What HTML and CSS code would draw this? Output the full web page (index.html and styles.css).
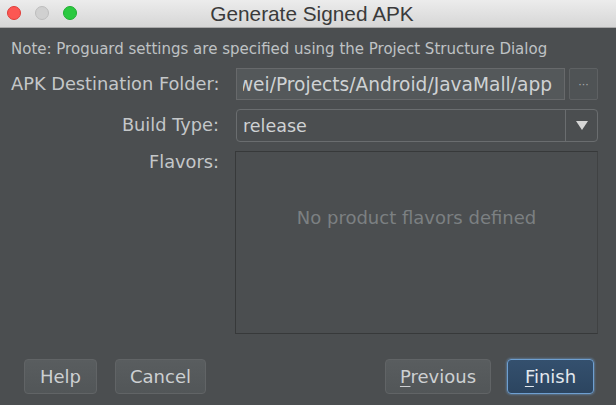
FILE: index.html
```html
<!DOCTYPE html>
<html>
<head>
<meta charset="utf-8">
<link rel="stylesheet" href="styles.css">
</head>
<body>
<div class="window">
  <div class="titlebar">
    <div class="lights">
      <span class="light red"></span>
      <span class="light gray"></span>
      <span class="light green"></span>
    </div>
    <div class="title">Generate Signed APK</div>
  </div>
  <div class="content">
    <div class="note">Note: Proguard settings are specified using the Project Structure Dialog</div>
    <div class="form">
      <label class="label">APK Destination Folder:</label>
      <div class="row">
        <div class="textfield"><div class="tf-clip"><span class="tf-text">wei/Projects/Android/JavaMall/app</span></div></div>
        <div class="browse">···</div>
      </div>
      <label class="label">Build Type:</label>
      <div class="combo">
        <span class="combo-text">release</span>
        <span class="combo-arrow"><svg width="12" height="9" viewBox="0 0 12 9"><polygon points="0,0 12,0 6,9" fill="#d6d6d6"/></svg></span>
      </div>
      <label class="label label-top">Flavors:</label>
      <div class="flavors"><span class="empty">No product flavors defined</span></div>
    </div>
    <div class="buttons">
      <div class="group">
        <button class="btn help">Help</button>
        <button class="btn cancel">Cancel</button>
      </div>
      <div class="group group-right">
        <button class="btn prev"><u>P</u>revious</button>
        <button class="btn primary finish"><u>F</u>inish</button>
      </div>
    </div>
  </div>
</div>
</body>
</html>
```
FILE: styles.css
```css
* { box-sizing: border-box; }
html, body { margin: 0; padding: 0; }
body {
  width: 616px;
  height: 405px;
  overflow: hidden;
  background: #4b4e50;
  font-family: "DejaVu Sans", "Liberation Sans", sans-serif;
}
.window {
  display: flex;
  flex-direction: column;
  height: 405px;
}
.titlebar {
  position: relative;
  height: 28px;
  flex: none;
  background: linear-gradient(#ececec, #d6d6d6);
  border-bottom: 1px solid #a9a9a9;
  display: flex;
  align-items: center;
  justify-content: center;
  padding-left: 8px;
}
.lights {
  position: absolute;
  left: 7px;
  top: 6px;
  display: flex;
  gap: 14px;
}
.light {
  width: 14px;
  height: 14px;
  border-radius: 50%;
  display: block;
}
.red { background: #fc5753; border: 1px solid #df3d39; }
.gray { background: #d0d0d0; border: 1px solid #bdbdbd; }
.green { background: #2bc940; border: 1px solid #1fae31; }
.title {
  font-family: "Liberation Sans", Arial, sans-serif;
  font-size: 20.8px;
  color: #3a3a3a;
  padding-top: 1px;
}
.content {
  flex: 1;
  padding: 11px 18px 0 11px;
  display: flex;
  flex-direction: column;
  background: #4b4e50;
}
.note {
  font-size: 15px;
  color: #bfc2c4;
  height: 21px;
  line-height: 21px;
  white-space: nowrap;
}
.form {
  margin-top: 8px;
  display: grid;
  grid-template-columns: 208px minmax(0, 1fr);
  column-gap: 17px;
  row-gap: 9px;
  grid-template-rows: 32px 33px 183px;
}
.label {
  font-size: 17.8px;
  color: #c4c7c9;
  text-align: right;
  line-height: 32px;
  white-space: nowrap;
}
.label-top { line-height: 22px; }
.row {
  display: flex;
  gap: 4px;
  min-width: 0;
}
.textfield {
  flex: 1;
  min-width: 0;
  background: #54585a;
  border: 1px solid #67696b;
  display: flex;
  align-items: center;
  padding: 0 12px 0 6px;
}
.tf-clip {
  flex: 1;
  min-width: 0;
  overflow: hidden;
  display: flex;
  justify-content: flex-end;
}
.tf-text {
  font-size: 18.6px;
  color: #cfd2d4;
  white-space: nowrap;
  flex: none;
}
.browse {
  width: 29px;
  flex: none;
  border: 1px solid #5e6163;
  background: #4f5355;
  color: #a9acae;
  font-size: 11px;
  display: flex;
  align-items: center;
  justify-content: center;
  border-radius: 2px;
}
.combo {
  border: 1px solid #6a6d6f;
  border-radius: 4px;
  display: flex;
  align-items: center;
  background: #4b4e50;
  min-width: 0;
}
.combo-text {
  flex: 1;
  padding-left: 6px;
  font-size: 17.5px;
  color: #cfd2d4;
}
.combo-arrow {
  width: 32px;
  align-self: stretch;
  border-left: 1px solid #6a6d6f;
  display: flex;
  align-items: center;
  justify-content: center;
}
.flavors {
  margin-left: -1px;
  border: 1px solid #37393a;
  border-right-color: #404243;
  background: #4b4e50;
  display: flex;
  align-items: center;
  justify-content: center;
  padding-bottom: 50px;
  min-width: 0;
}
.empty {
  font-size: 18px;
  color: #7c8082;
}
.buttons {
  margin-top: 25px;
  display: flex;
  justify-content: space-between;
  padding-left: 13px;
  padding-right: 4px;
}
.group {
  display: flex;
  gap: 18px;
}
.group-right { gap: 16px; }
.btn {
  font-family: "DejaVu Sans", "Liberation Sans", sans-serif;
  font-size: 18px;
  color: #cdd0d2;
  height: 35px;
  border-radius: 4px;
  border: 1px solid #616466;
  background: linear-gradient(#595d5f, #525658);
  padding: 0;
}
.btn u { text-decoration-thickness: 1px; text-underline-offset: 3px; }
.help { width: 73px; }
.cancel { width: 91px; }
.prev { width: 106px; }
.finish { width: 87px; }
.primary {
  background: linear-gradient(#34506e, #2c4560);
  border: 1px solid #6e9fd1;
  box-shadow: 0 0 2px 1px rgba(110,160,210,0.45);
  color: #e2e8ee;
}
```
